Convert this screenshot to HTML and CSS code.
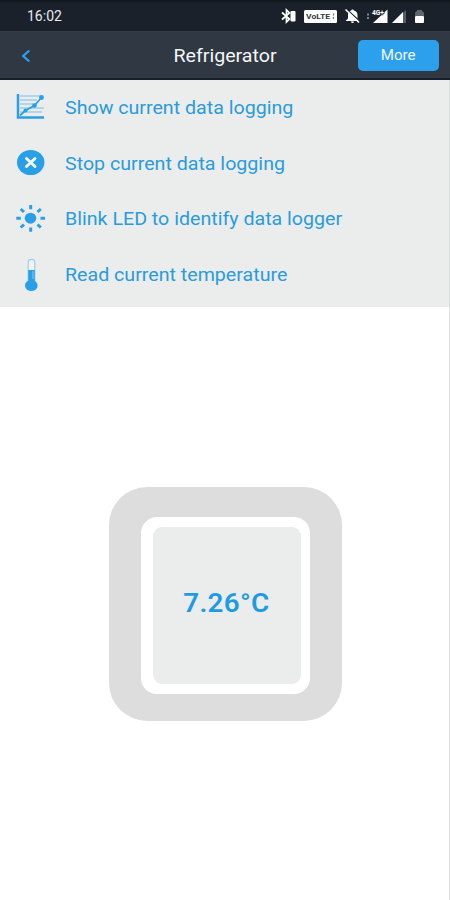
FILE: index.html
```
<!DOCTYPE html>
<html lang="en">
<head>
    <meta charset="UTF-8">
    <meta name="viewport" content="width=device-width, initial-scale=1.0">
    <title>Refrigerator</title>
    <link rel="stylesheet" href="styles.css">
</head>
<body>
    <div class="status-bar">
        <span class="clock">16:02</span>
        <svg class="status-icons" width="150" height="20" viewBox="0 0 150 20">
            <!-- bluetooth -->
            <path d="M2 6.500l7.500 6.500-3 3V4l3 3L2 13.500" fill="none" stroke="#fff" stroke-width="1.700"/>
            <rect x="10.500" y="5" width="5" height="10.500" rx="1" fill="#fff"/>
            <!-- volte -->
            <rect x="24" y="4" width="33" height="13" rx="1.500" fill="#fff"/>
            <text class="volte" x="26" y="13.200" textLength="24" lengthAdjust="spacingAndGlyphs">VoLTE</text>
            <path d="M53.500 7.500v6" stroke="#777" stroke-width="1.300" stroke-dasharray="2 1.500"/>
            <!-- bell off -->
            <path d="M65.500 15l2.500-2.500V9c0-2.500 1.500-4 3.200-4.500C71.200 3 73.800 3 73.800 4.500 76 5 77.500 6.500 77.500 9v3.500l2 2.500z" fill="#fff"/>
            <path d="M71 15.500h3a1.500 1.500 0 0 1-3 0z" fill="#fff"/>
            <path d="M67 3.500l13 12" stroke="#1a212b" stroke-width="1.200"/>
            <path d="M65.500 3.500l13.500 13" stroke="#fff" stroke-width="1.600"/>
            <!-- signal -->
            <path d="M88 7.500v6" stroke="#7d838a" stroke-width="2" stroke-dasharray="2 1.500"/>
            <path d="M107.500 3.500v13.500H93z" fill="#fff"/>
            <text class="net" x="92" y="9" textLength="12" lengthAdjust="spacingAndGlyphs">4G+</text>
            <path d="M126 4v13H112z" fill="#555c64"/>
            <path d="M123 6v11h-11z" fill="#fff"/>
            <!-- battery -->
            <path d="M135 10V6.500L137 5V4h5v1l2 1.500V10z" fill="#60666d"/>
            <rect x="135" y="10" width="9" height="7" rx="1" fill="#fff"/>
        </svg>
    </div>

    <header class="header">
        <button class="back" aria-label="Back">
            <svg width="12" height="14" viewBox="0 0 12 14"><path d="M9.300 1.500L3.200 7l6.100 5.500" fill="none" stroke="#2f9fe8" stroke-width="2.300"/></svg>
        </button>
        <h1 class="title">Refrigerator</h1>
        <button class="more"><span>More</span></button>
    </header>

    <ul class="menu">
        <li class="menu-item">
            <svg class="icon" width="32" height="32" viewBox="0 0 32 32">
                <path d="M5 4h20M5 8h17M5 12h15M5 16h24M5 20h22" stroke="#9fcdec" stroke-width="1.300"/>
                <path d="M3 2v23.500h26" fill="none" stroke="#2a9fe9" stroke-width="2.500"/>
                <path d="M5 23.500L10.500 18.500 19.500 13.500 26.500 5.500" fill="none" stroke="#2a9fe9" stroke-width="1.700"/>
                <g fill="#2a9fe9"><circle cx="10.500" cy="18.500" r="2.100"/><circle cx="19.500" cy="13.500" r="2.300"/><circle cx="26.500" cy="5.500" r="2.400"/></g>
            </svg>
            <span class="label">Show current data logging</span>
        </li>
        <li class="menu-item">
            <svg class="icon" width="32" height="32" viewBox="0 0 32 32">
                <ellipse cx="15.700" cy="15.500" rx="13.700" ry="12.600" fill="#2a9fe9"/>
                <path d="M11.500 11.500l8.500 8M20 11.500l-8.500 8" stroke="#f0f5f8" stroke-width="3" stroke-linecap="round"/>
            </svg>
            <span class="label">Stop current data logging</span>
        </li>
        <li class="menu-item">
            <svg class="icon" width="32" height="32" viewBox="0 0 32 32">
                <ellipse cx="15.500" cy="15.200" rx="5.800" ry="5.500" fill="#2a9fe9"/>
                <path d="M15.700 2v4.200M15.700 24.500v4.200M1.300 15.200h4.500M25.500 15.200h4.500M5.700 6l3.300 3M22.500 21.500l3.300 3M25.800 6l-3.300 3M9 21.500L5.700 24.500" stroke="#2a9fe9" stroke-width="3"/>
            </svg>
            <span class="label">Blink LED to identify data logger</span>
        </li>
        <li class="menu-item">
            <svg class="icon" width="32" height="34" viewBox="0 0 32 34">
                <path d="M13.200 23V4.500a3.200 3 0 0 1 6.600 0V23" fill="#eef3f4" stroke="#9fcdec" stroke-width="1.200"/>
                <path d="M13.200 12h6.600V25h-6.600z" fill="#2a9fe9"/>
                <path d="M18 13v8" stroke="#8cc8f0" stroke-width="1"/>
                <ellipse cx="16.300" cy="27.500" rx="6.300" ry="5.500" fill="#2a9fe9"/>
            </svg>
            <span class="label">Read current temperature</span>
        </li>
    </ul>

    <main class="content">
        <div class="gauge">
            <div class="gauge-frame">
                <div class="gauge-screen"><span class="temp">7.26°C</span></div>
            </div>
        </div>
    </main>
</body>
</html>
```
FILE: styles.css
```
* {
    box-sizing: border-box;
}

body {
    font-family: Roboto, "Liberation Sans", sans-serif;
    margin: 0;
    height: 900px;
    display: flex;
    flex-direction: column;
    background-color: white;
    overflow: hidden;
}

.status-bar {
    height: 31px;
    flex: none;
    display: flex;
    align-items: center;
    justify-content: space-between;
    padding: 1px 20px 0 27px;
    background: linear-gradient(#10151c, #1a212b 4px);
    color: #e8eaec;
}

.clock {
    font-size: 14px;
}

.status-icons {
    margin-top: 0;
}

.volte {
    font-size: 8px;
    font-weight: bold;
    fill: #333a42;
}

.net {
    font-size: 7px;
    font-weight: bold;
    fill: white;
    stroke: #1a212b;
    stroke-width: 1.5px;
    paint-order: stroke;
}

.header {
    height: 49px;
    flex: none;
    display: grid;
    grid-template-columns: 92px 1fr 92px;
    align-items: center;
    background-color: #2f3843;
    border-bottom: 2px solid #17202a;
}

button {
    border: none;
    font-family: inherit;
    cursor: pointer;
}

.back {
    justify-self: start;
    display: flex;
    margin-left: 20px;
    padding: 2px 0 0;
    background: none;
}

.title {
    margin: 1px 0 0;
    text-align: center;
    font-size: 18px;
    font-weight: 400;
    transform: scaleX(1.09);
    color: #f4f6f8;
}

.more {
    width: 81px;
    height: 31px;
    margin-top: 1px;
    padding: 0 0 1px;
    border-radius: 5px;
    background-color: #2da0ed;
    color: #f0f8fe;
    font-size: 14px;
}

.more span {
    display: inline-block;
    transform: scaleX(1.08);
}

.menu {
    flex: none;
    height: 227px;
    margin: 0;
    padding: 0 0 4px;
    list-style: none;
    background-color: #eaedec;
    border-right: 1px solid #d8dbdc;
}

.menu-item {
    height: 55.6px;
    display: flex;
    align-items: center;
    padding-left: 15px;
    color: #2a9bdd;
}

/* wide lettering */
.label {
    margin-left: 18px;
    font-size: 18px;
    white-space: nowrap;
    transform: scaleX(1.09);
    transform-origin: left;
}

.content {
    flex: 1;
    padding: 180px 0 0 109px;
    border-right: 1px solid #dedede;
}

.gauge {
    width: 233px;
    height: 234px;
    padding: 30px 32px 27px 32px;
    border-radius: 38px;
    background-color: #ddd;
}

.gauge-frame {
    height: 100%;
    padding: 10px 9px 10px 12px;
    border-radius: 16px;
    background-color: white;
}

.gauge-screen {
    height: 100%;
    display: flex;
    align-items: center;
    justify-content: center;
    padding: 0 2px 5px 0;
    border-radius: 9px;
    background-color: #eaedec;
}

.temp {
    color: #1f9be6;
    font-size: 26px;
    font-weight: 600;
    letter-spacing: 0.3px;
    transform: scaleX(1.07);
}
```
